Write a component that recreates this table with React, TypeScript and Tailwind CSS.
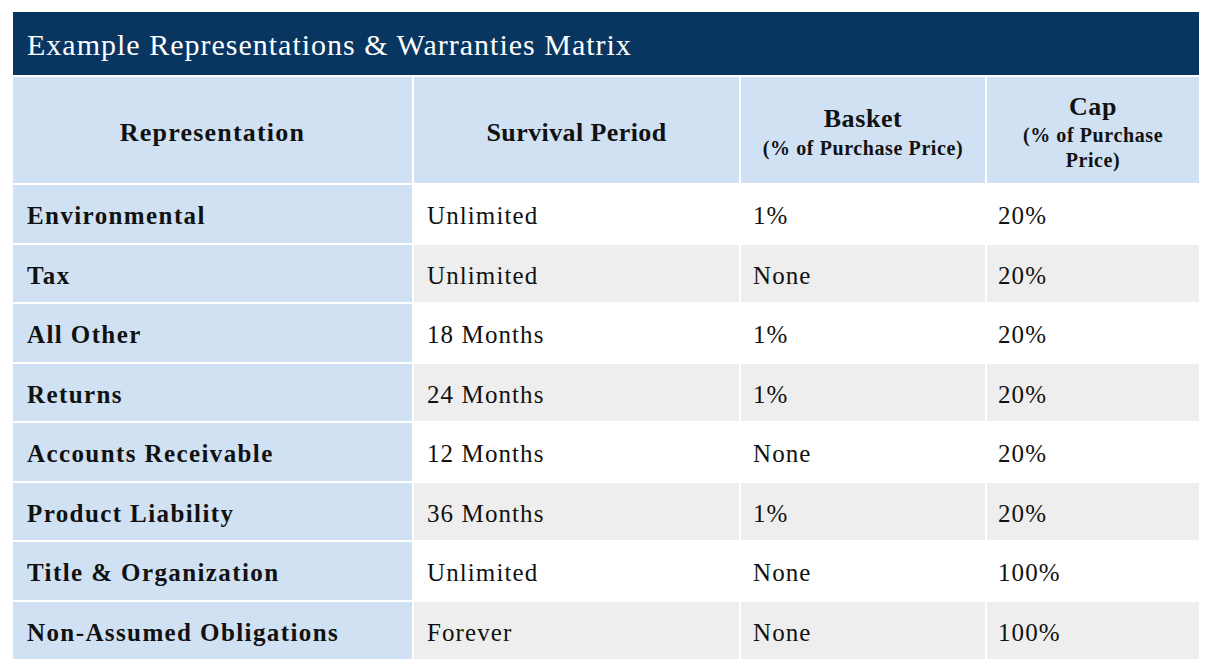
const rows = [
  { label: "Environmental", period: "Unlimited", basket: "1%", cap: "20%" },
  { label: "Tax", period: "Unlimited", basket: "None", cap: "20%" },
  { label: "All Other", period: "18 Months", basket: "1%", cap: "20%" },
  { label: "Returns", period: "24 Months", basket: "1%", cap: "20%" },
  { label: "Accounts Receivable", period: "12 Months", basket: "None", cap: "20%" },
  { label: "Product Liability", period: "36 Months", basket: "1%", cap: "20%" },
  { label: "Title & Organization", period: "Unlimited", basket: "None", cap: "100%" },
  { label: "Non-Assumed Obligations", period: "Forever", basket: "None", cap: "100%" },
];

export default function App() {
  return (
    <div className="w-[1210px] h-[672px] bg-white pt-[12px] pl-[13px] font-['Liberation_Serif',serif] text-[#111]">
      <div className="w-[1186px]">
        {/* Title bar */}
        <div className="h-[63px] bg-[#083661] flex items-center pl-[14px] pt-[2px] text-white text-[30px] tracking-[1px]">
          Example Representations &amp; Warranties Matrix
        </div>

        {/* Table */}
        <div className="mt-[2px] grid grid-cols-[399px_325px_244px_212px] grid-rows-[106px_repeat(8,57.5px)] gap-[2px]">
          <div className="bg-[#cfe1f2] flex items-center justify-center pt-[4px] font-bold text-[26px] tracking-[1.2px]">
            Representation
          </div>
          <div className="bg-[#cfe1f2] flex items-center justify-center pt-[4px] font-bold text-[26px] tracking-[0.4px]">
            Survival Period
          </div>
          <div className="bg-[#cfe1f2] flex flex-col items-center justify-center pt-[4px] font-bold leading-tight">
            <span className="text-[26px] tracking-[0.6px]">Basket</span>
            <span className="text-[20px] tracking-[0.6px]">(% of Purchase Price)</span>
          </div>
          <div className="bg-[#cfe1f2] flex flex-col items-center justify-center pt-[4px] font-bold text-center leading-tight">
            <span className="text-[26px] tracking-[0.6px]">Cap</span>
            <span className="text-[20px] tracking-[0.6px] w-[160px] leading-[25px]">(% of Purchase Price)</span>
          </div>

          {rows.map((r, i) => {
            const bg = i % 2 === 0 ? "bg-white" : "bg-[#eeeeee]";
            return (
              <div key={r.label} className="contents">
                <div className="bg-[#cfe1f2] flex items-center pl-[14px] pt-[4px] font-bold text-[25px] tracking-[1.4px]">
                  {r.label}
                </div>
                <div className={`${bg} flex items-center pl-[13px] pt-[4px] text-[25px] tracking-[1.1px]`}>{r.period}</div>
                <div className={`${bg} flex items-center pl-[12px] pt-[4px] text-[25px] tracking-[1.1px]`}>{r.basket}</div>
                <div className={`${bg} flex items-center pl-[11px] pt-[4px] text-[25px] tracking-[1.1px]`}>{r.cap}</div>
              </div>
            );
          })}
        </div>
      </div>
    </div>
  );
}
